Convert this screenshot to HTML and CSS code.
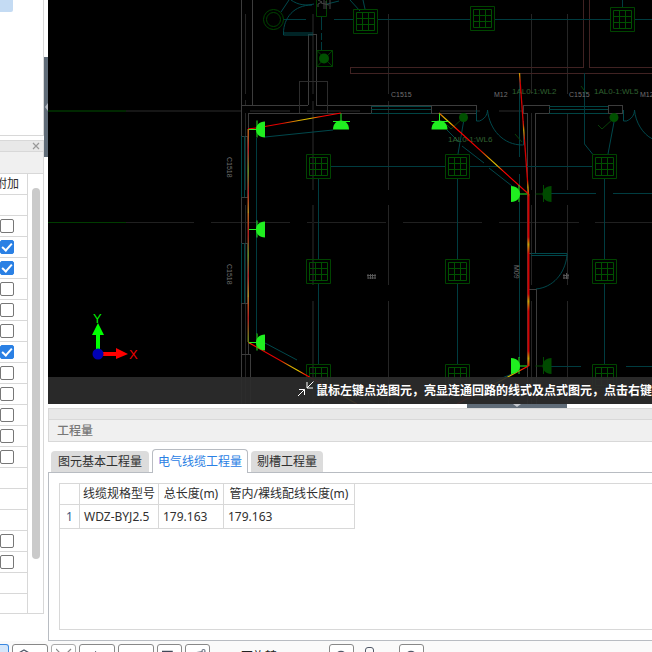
FILE: index.html
```
<!DOCTYPE html>
<html lang="zh-CN">
<head>
<meta charset="utf-8">
<title>工程量</title>
<link rel="stylesheet" href="styles.css">
</head>
<body>
<div class="workspace">
  <aside class="sidebar">
    <section class="tree"><div class="tree-item"></div></section>
    <section class="props">
      <header class="props-bar">
        <button class="close" type="button" aria-label="关闭"><svg width="8" height="8" viewBox="0 0 8 8"><path d="M1 1l6 6M7 1l-6 6" stroke="#999" stroke-width="1.2"/></svg></button>
      </header>
      <div class="props-sub"></div>
      <div class="props-body">
        <table class="props-table">
          <thead><tr><th>附加</th></tr></thead>
          <tbody>
            <tr><td></td></tr>
            <tr><td><input type="checkbox" aria-label="附加"></td></tr>
            <tr><td><input type="checkbox" aria-label="附加" checked></td></tr>
            <tr><td><input type="checkbox" aria-label="附加" checked></td></tr>
            <tr><td><input type="checkbox" aria-label="附加"></td></tr>
            <tr><td><input type="checkbox" aria-label="附加"></td></tr>
            <tr><td><input type="checkbox" aria-label="附加"></td></tr>
            <tr><td><input type="checkbox" aria-label="附加" checked></td></tr>
            <tr><td><input type="checkbox" aria-label="附加"></td></tr>
            <tr><td><input type="checkbox" aria-label="附加"></td></tr>
            <tr><td><input type="checkbox" aria-label="附加"></td></tr>
            <tr><td><input type="checkbox" aria-label="附加"></td></tr>
            <tr><td><input type="checkbox" aria-label="附加"></td></tr>
            <tr><td></td></tr>
            <tr><td></td></tr>
            <tr><td></td></tr>
            <tr><td><input type="checkbox" aria-label="附加"></td></tr>
            <tr><td><input type="checkbox" aria-label="附加"></td></tr>
            <tr><td></td></tr>
            <tr><td></td></tr>
          </tbody>
        </table>
        <div class="scroll"><div class="thumb"></div></div>
      </div>
    </section>
  </aside>
  <div class="split-v"><div class="grip-v"><svg width="4" height="8" viewBox="0 0 4 8"><path d="M4 0v8L1 4z" fill="#b4bac2"/></svg></div></div>
  <main class="main">
    <section class="canvas">
      <svg class="drawing" viewBox="48 0 604 404" preserveAspectRatio="xMinYMin slice" fill="none">
        <defs>
          <linearGradient id="flow" gradientUnits="userSpaceOnUse" x1="248" y1="120" x2="300" y2="152" spreadMethod="repeat">
            <stop offset="0" stop-color="#f00"/><stop offset=".5" stop-color="#e00000"/><stop offset=".7" stop-color="#d8a000"/><stop offset=".85" stop-color="#e0c800"/><stop offset="1" stop-color="#f00"/>
          </linearGradient>
          <linearGradient id="flowV" gradientUnits="userSpaceOnUse" x1="0" y1="129" x2="0" y2="213" spreadMethod="repeat">
            <stop offset="0" stop-color="#b8681c"/><stop offset=".25" stop-color="#b02020"/><stop offset=".5" stop-color="#68801c"/><stop offset=".75" stop-color="#b02020"/><stop offset="1" stop-color="#b08820"/>
          </linearGradient>
          <linearGradient id="flowR" gradientUnits="userSpaceOnUse" x1="0" y1="180" x2="0" y2="237" spreadMethod="repeat">
            <stop offset="0" stop-color="#d40000"/><stop offset=".13" stop-color="#c8a000"/><stop offset=".3" stop-color="#d40000"/><stop offset="1" stop-color="#d40000"/>
          </linearGradient>
          <g id="lamp" stroke="#004400"><path d="M-12-12h24v24h-24z"/><path d="M-9-9h18v18h-18zM-3-9v18M3-9v18M-9-3h18M-9 3h18" stroke="#005000"/></g>
          <g id="socket"><path d="M8-8v16C2 8-1 4-1 0S2-8 8-8z" fill="#20ee20"/><path d="M0-9V8M0 0h-8" stroke="#20ee20"/></g>
          <g id="socketDim"><path d="M8-8v16C2 8-1 4-1 0S2-8 8-8z" fill="#004a00"/><path d="M0-9V8M0 0h-8" stroke="#004a00"/></g>
        </defs>
        <g shape-rendering="crispEdges">
          <path d="M48 111H126" stroke="#002800" stroke-width="2"/>
          <path d="M48 222.500H126" stroke="#003c00"/>
          <path d="M126 111H241M250 111H290M307 111H360M440 111H480M499 111H523" stroke="#161616" stroke-width="2"/>
          <path d="M126 222.500H194M211 222.500H290M307 222.500H386M403 222.500H482M499 222.500H579M595 222.500H652" stroke="#202020"/>
          <path d="M245.500 14V94M245.500 100V105M245.500 113V190M245.500 205V404M388.500 14V94M388.500 101V190M388.500 205V285M388.500 301V404M531.500 14V94M531.500 113V190M531.500 205V285M531.500 301V404M567.500 14V94M567.500 113V190M567.500 205V285M567.500 301V404" stroke="#252525"/>
          <path d="M313 14V94M313 101V190M313 205V285M313 301V404" stroke="#161616" stroke-width="2"/>
          <path d="M241 0V105.500H308M252.500 0V105M308.500 105V34.500H316.500V105.500H476V113.500H248.500V354.500M241.500 105V354.500H250.500V404M241.500 354V404M241 136.500H248M241 197.500H248M241 243.500H248M241 303.500H248M371.500 105V113M431.500 105V113M549 105.500H523.500V113.500H527.500V404M549 113.500H535.500V253.500H528M536 404V289.500H528M549.500 105V113M608.500 105.500H622.500V113.500H608.500z" stroke="#3c3c3c"/>
          <path d="M299.500 113V81.500H327.500V113" stroke="#2c2c2c"/>
          <path d="M371 106.500H431M371 109.500H431M371 113.500H431M549 106.500H608M549 109.500H608M549 113.500H608M241.500 136V197M244.500 136V197M247.500 136V197M241.500 243V303M244.500 243V303M247.500 243V303" stroke="#004444"/>
          <path d="M652 73.500H350.500V67.500H583.500V0M652 67.500H589.500V0" stroke="#402222"/>
          <path d="M283 19.500H306M334 19.500H353M378 19.500H470M495 19.500H610M635 19.500H652M321.500 16V30M321.500 33V40M321.500 42V50M318.500 178V259M318.500 284V364M457.500 178V259M457.500 284V364M604.500 178V259M604.500 284V364M331 166.500H445M470 166.500H592M622.500 0V7M256.500 138V334M519.500 73V157M519.500 174V186M519.500 202V358M584.500 73V144M551 193.500H596M613 193.500H652M551 366.500H581M626 366.500H652" stroke="#003c40"/>
        </g>
        <g stroke="#00484c">
          <path d="M313 33H283.500v2H313M283.500 33C283.500 18 294 5 312 5M291 0C298 5 306 6 314 4M281 12l8-12M327 4l12-3M350 0l10 11M363 0l2 9M265 137l68-7M265 343l32 17M339 382l36 22M463.500 122L458 154M614 122l-6 32M584.500 144l8 10M447 130l12 12M462 146l22 17M489 168l23 18M512 374l-72 29"/>
          <path d="M476.500 110v11h3c5-2 8-6 8-11 2 20 16 35 35 35h1v-24M623.500 110v11h3c5-2 8-6 8-11 1 12 8 24 18 29M531 253.500h36v2h-36M567 255.500c-2 18-14 32-31 33.500"/>
        </g>
        <g stroke="#004400">
          <circle cx="273.500" cy="19.500" r="10"/><circle cx="273.500" cy="19.500" r="7"/>
          <path d="M316.500 0v16.500h10V0M317 50.500h15.500v16H317zM317 50.500l15.500 16M332.500 50.500l-15.500 16"/>
          <path d="M463 118l-12 11-4-4M614 118l-12 11-4-4M581 86l6 8M515 134l7 8" stroke="#084008"/>
        </g>
        <g fill="#005000"><circle cx="324" cy="58.500" r="5"/><circle cx="463.500" cy="117.500" r="4.500"/><circle cx="614" cy="117.500" r="4.500"/></g>
        <use href="#lamp" x="365.500" y="21.500"/><use href="#lamp" x="482.500" y="18.500"/><use href="#lamp" x="622.500" y="19.500"/>
        <use href="#lamp" x="318.500" y="166.500"/><use href="#lamp" x="457.500" y="166.500"/><use href="#lamp" x="604.500" y="166.500"/>
        <use href="#lamp" x="318.500" y="271.500"/><use href="#lamp" x="457.500" y="271.500"/><use href="#lamp" x="604.500" y="271.500"/>
        <use href="#lamp" x="318.500" y="376.500"/><use href="#lamp" x="457.500" y="376.500"/><use href="#lamp" x="604.500" y="376.500"/>
        <path d="M318 0l4 2-4 2v3M324 0v9M321 3l8 2M326 1v8M330 0v9" stroke="#444"/>
        <g class="cad-note">
          <text x="391" y="97">C1515</text><text x="494" y="97">M12</text><text x="569" y="97">C1515</text><text x="640" y="97">M12</text>
          <text transform="translate(227 157) rotate(90)">C1518</text><text transform="translate(227 264) rotate(90)">C1518</text><text transform="translate(514 265) rotate(90)">M09</text>
        </g>
        <path d="M368 274v5M370.500 274v5M372.500 274v5M375 274v5M367 275.500h9M368 278h8M564 274v5M566.500 273v6M563 275.500h6M563 278h5M568 274v5" stroke="#555"/>
        <g class="cad-label"><text x="512" y="94">1AL0-1:WL2</text><text x="594" y="94">1AL0-1:WL5</text><text x="448" y="142">1AL0-1:WL6</text></g>
        <path d="M248 129l8-1M265 126.500l76-13.500M248.500 342.500L357 404M439 113l89.500 81M528.500 366L457 404" stroke="url(#flow)" stroke-width="1.200"/>
        <path d="M519.500 73l9 121" stroke="url(#flowR)" stroke-width="1.300"/>
        <path d="M247.500 129h1.500v213h-1.500z" fill="url(#flowV)"/>
        <path d="M527.500 194h2v172h-2z" fill="url(#flowR)"/>
        <use href="#socket" x="257" y="129.500"/><use href="#socket" x="257" y="229.500"/><use href="#socket" x="257" y="342.500"/>
        <use href="#socket" transform="translate(341 121.500) rotate(90)"/><use href="#socket" transform="translate(439.500 121.500) rotate(90)"/>
        <use href="#socket" transform="translate(519 194) scale(-1 1)"/><use href="#socket" transform="translate(519 366) scale(-1 1)"/>
        <use href="#socketDim" x="543.500" y="194"/><use href="#socketDim" x="543.500" y="366"/>
        <path d="M96 350V335h-4l6-12 6 12h-4v15z" fill="#0f0"/>
        <path d="M103 352h13v-4l12 6-12 5v-3h-13z" fill="#f00"/>
        <circle cx="98" cy="354" r="5.500" fill="#0000b4"/>
        <text class="axis" x="93" y="323" fill="#0e0">Y</text><text class="axis" x="129" y="359" fill="#e00">X</text>
      </svg>
      <div class="hint">
        <svg width="16" height="16" viewBox="0 0 16 16" fill="none" stroke="#fff"><path d="M0 15l6.500-6.500M1 8.500h5.500V14M15.500.5L9 7M9 1v6h6"/></svg>
        <span>鼠标左键点选图元，亮显连通回路的线式及点式图元，点击右键确认</span>
      </div>
    </section>
    <div class="split-h"><div class="grip-h"><svg width="8" height="4" viewBox="0 0 8 4"><path d="M0 0h8L4 3z" fill="#c4c8ce"/></svg></div></div>
    <section class="quantity">
      <div class="dock-bar"></div>
      <h2 class="dock-title">工程量</h2>
      <nav class="tabs">
        <button class="tab" type="button">图元基本工程量</button>
        <button class="tab active" type="button">电气线缆工程量</button>
        <button class="tab" type="button">剔槽工程量</button>
      </nav>
      <div class="tab-body">
        <div class="grid-box">
          <table class="grid">
            <thead><tr><th class="num"></th><th class="spec">线缆规格型号</th><th class="total">总长度(m)</th><th class="inner">管内/裸线配线长度(m)</th></tr></thead>
            <tbody><tr><td class="num">1</td><td>WDZ-BYJ2.5</td><td>179.163</td><td>179.163</td></tr></tbody>
          </table>
        </div>
      </div>
    </section>
  </main>
</div>
<footer class="toolbar">
  <button class="tool first on" type="button" aria-label="选择"></button>
  <button class="tool wide" type="button" aria-label="视图"><svg width="24" height="18" viewBox="0 0 24 18" fill="none" stroke="#505868" stroke-width="1.300"><path d="M0 6l7-4 7 4-7 4z"/></svg></button>
  <button class="tool pale" type="button" aria-label="交点"><svg width="17" height="18" viewBox="0 0 17 18" fill="none" stroke="#888" stroke-width="1.200"><path d="M0 1l14 14M15 1L1 15"/></svg></button>
  <button class="tool wide" type="button" aria-label="直线"><svg width="24" height="18" viewBox="0 0 24 18" fill="none" stroke="#606878"><path d="M12 3L4 13"/></svg></button>
  <button class="tool wide" type="button" aria-label="正交"><svg width="28" height="18" viewBox="0 0 28 18" fill="none" stroke="#404858"><path d="M2.500 4v11h12"/></svg></button>
  <button class="tool" type="button" aria-label="复制"><svg width="18" height="18" viewBox="0 0 18 18" fill="none" stroke="#404858" stroke-width="1.500"><path d="M0 16V3.500h10v2h2v10M3 6h6v8H3z"/></svg></button>
  <button class="tool" type="button" aria-label="延伸"><svg width="18" height="18" viewBox="0 0 18 18" fill="none" stroke="#707888" stroke-width="1.200"><path d="M2 5.500l10-2M3 14l9-9"/><circle cx="13.500" cy="3" r="1.500"/></svg></button>
  <span class="rotate-label">不旋转</span>
  <button class="tool rotate" type="button" aria-label="旋转"><svg width="16" height="18" viewBox="0 0 16 18" fill="none" stroke="#505868" stroke-width="1.300"><circle cx="7" cy="9" r="5.500"/></svg></button>
  <span class="knob"></span>
  <button class="tool zoom" type="button" aria-label="缩放"><svg width="16" height="18" viewBox="0 0 16 18" fill="none" stroke="#505868" stroke-width="1.300"><circle cx="7" cy="9" r="5.500"/></svg></button>
</footer>
</body>
</html>
```
FILE: styles.css
```
* { box-sizing: border-box; }
body {
  margin: 0;
  height: 100vh;
  display: flex;
  flex-direction: column;
  overflow: hidden;
  background: #fff;
  color: #303030;
  font: 12px/16px "Noto Sans", "Noto Sans CJK SC", sans-serif;
}
button { font: inherit; color: inherit; padding: 0; border: 0; background: none; }
svg { display: block; flex: none; }
table { border-collapse: separate; border-spacing: 0; }

.workspace { flex: 1; min-height: 0; display: flex; }
.sidebar { width: 44px; display: flex; flex-direction: column; gap: 4px; }
.tree { height: 136px; border: solid #d8d8d8; border-width: 0 1px 1px 0; }
.tree-item { width: 13px; height: 12px; background: #c4dbf3; border-bottom-right-radius: 2px; }
.props { border: solid #d8d8d8; border-width: 1px 1px 1px 0; }
.props-bar { height: 11px; display: flex; justify-content: flex-end; align-items: center; padding-right: 3px; background: #e8e8e8; border-bottom: 1px solid #d8d8d8; }
.props-sub { height: 22px; background: #f0f0f0; border-bottom: 1px solid #d8d8d8; }
.props-body { display: flex; justify-content: flex-end; overflow: hidden; }
.props-table { width: 60px; flex: none; border-right: 1px solid #d8d8d8; }
.props-table th, .props-table td { height: 21px; padding: 0 13px 0 0; text-align: right; border-bottom: 1px solid #d8d8d8; line-height: 16px; }
.props-table th { padding-right: 8px; font-weight: 400; }
.props-table tbody tr:last-child td { height: 19px; border-bottom: 0; }
.props-table input { appearance: none; display: block; width: 14px; height: 14px; margin: 0 0 0 auto; border: 1px solid #777; border-radius: 2px; background: #fff; }
.props-table input:checked { border-color: #2a80e4; background: #2a80e4; }
.props-table input:checked::after { content: ""; display: block; width: 4px; height: 8px; margin: 0 auto; border: solid #fff; border-width: 0 2px 2px 0; transform: rotate(42deg); }
.scroll { width: 15px; flex: none; padding: 14px 0 0 4px; }
.thumb { width: 8px; height: 371px; border-radius: 4px; background: #cacaca; }

.split-v { width: 4px; padding-top: 57px; }
.grip-v { height: 100px; background: #606c78; display: flex; align-items: center; }
.main { flex: 1; min-width: 0; display: flex; flex-direction: column; }
.canvas { flex: 1; min-height: 0; position: relative; overflow: hidden; background: #000; }
.drawing { width: 100%; height: 100%; }
.cad-note { font: 7px "Liberation Sans", sans-serif; fill: #707070; }
.cad-label { font: 8px "Liberation Sans", sans-serif; fill: #306030; }
.axis { font: 13px "Liberation Sans", sans-serif; }
.hint { position: absolute; left: 0; right: 0; bottom: 0; height: 27px; padding-left: 250px; display: flex; align-items: center; gap: 2px; overflow: hidden; white-space: nowrap; background: rgba(45, 45, 45, .92); color: #fff; font-weight: 600; }
.hint svg { margin-bottom: 4px; }
.split-h { height: 4px; flex: none; display: flex; padding-left: 419px; }
.grip-h { width: 100px; display: flex; justify-content: center; background: #606c78; }

.quantity { flex: none; }
.dock-bar { height: 12px; background: #e8e8e8; border: solid #d8d8d8; border-width: 1px 0 1px 1px; }
.dock-title { height: 22px; margin: 0; padding: 2px 8px; font-size: 12px; line-height: 18px; font-weight: 500; color: #777; background: #f0f0f0; border: solid #d8d8d8; border-width: 0 0 1px 1px; }
.tabs { display: flex; align-items: flex-end; gap: 3px; height: 30px; padding-left: 3px; }
.tab { height: 21px; padding: 0 6px; border-radius: 4px 4px 0 0; background: #dcdcdc; white-space: nowrap; }
.tab:first-child { padding: 0 7px; }
.tab.active { position: relative; height: 24px; margin-bottom: -1px; padding: 0 5px; border: 1px solid #b8bcc2; border-bottom: 0; background: #fff; color: #2a80e4; }
.tab-body { height: 169px; padding: 10px 0 10px 10px; border: solid #b8bcc2; border-width: 1px 0 1px 1px; }
.grid-box { height: 147px; border: solid #d8d8d8; border-width: 1px 0 1px 1px; }
.grid { table-layout: fixed; width: 295px; }
.grid th, .grid td { height: 21px; padding: 0 0 0 4px; text-align: left; font-weight: 400; white-space: nowrap; border: solid #d8d8d8; border-width: 0 1px 1px 0; }
.grid th { padding: 0; text-align: center; }
.grid td { height: 24px; }
.grid .num { width: 20px; padding: 0; text-align: center; color: #405880; }
.grid .spec { width: 79px; }
.grid .total { width: 65px; }

.toolbar { flex: none; height: 11px; overflow: hidden; display: flex; align-items: flex-start; gap: 3px; padding-top: 3px; background: #fafafa; }
.tool { flex: none; width: 25px; height: 25px; padding: 1px 4px; border: 1px solid #888; border-radius: 3px; background: #fff; }
.tool.wide { width: 36px; }
.tool.pale { border-color: #aaa; }
.tool.on { width: 8px; border-color: #3a88e0; background: #d4e6fa; border-left: 0; border-radius: 0 3px 3px 0; }
.rotate-label { margin: 5px 49px 0 28px; color: #222; }
.knob { width: 9px; height: 20px; margin: 3px 22px 0 8px; border: 1px solid #505868; border-radius: 3px; }
```
